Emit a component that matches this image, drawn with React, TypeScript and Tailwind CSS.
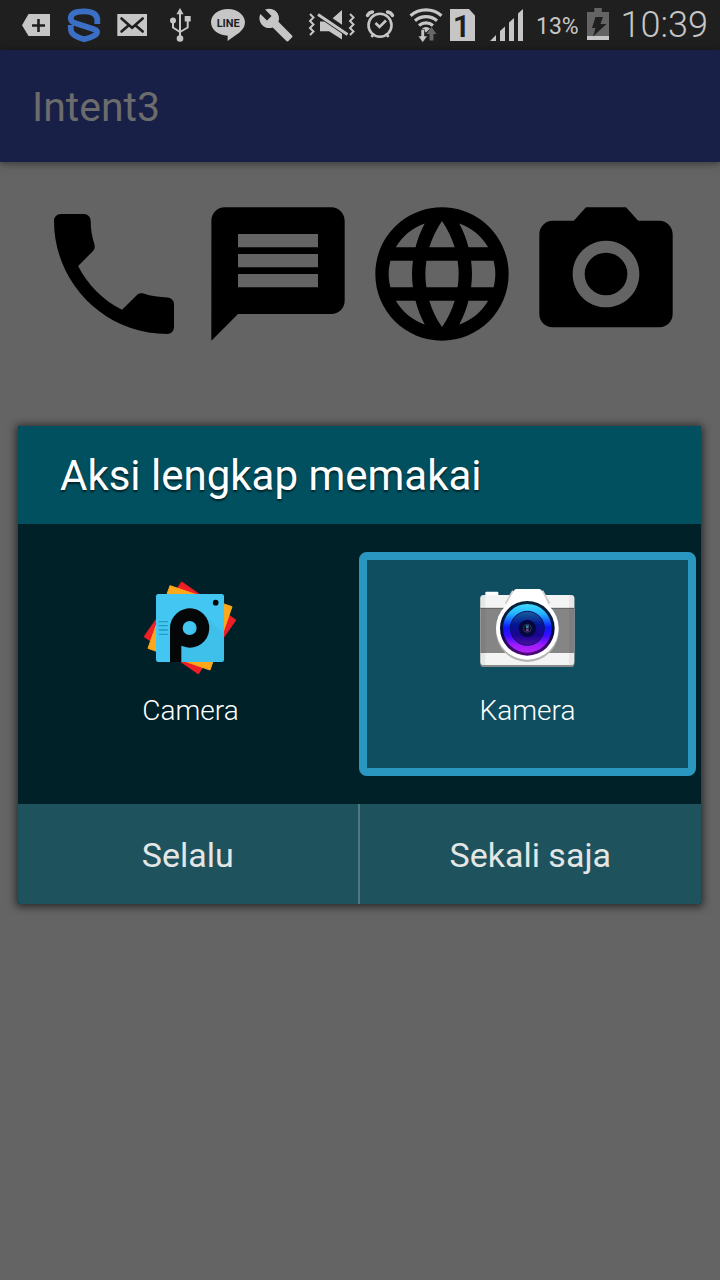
import type { ReactNode } from "react";

const INK = "#c6c6c6";
const DARK = "#1f1f1f";

/* Status bar glyph; `x` is where its slot starts in the bar's drawing space. */
function Glyph({ x, w, className, children }: { x: number; w: number; className: string; children: ReactNode }) {
  return (
    <svg aria-hidden="true" viewBox={`${x} 0 ${w} 50`} className={`h-[50px] shrink-0 ${className}`} fill={INK}>
      {children}
    </svg>
  );
}

function StatusBar() {
  return (
    <header className="flex h-[50px] items-center bg-[#1f1f1f] pl-3 pr-3 text-[#c6c6c6]">
      <Glyph x={12} w={48} className="w-12">
        <path d="M22 25.3 28.5 14H50v22H28.5z" />
        <path d="M38.5 19v13M32 25.5h13" stroke={DARK} strokeWidth="2.6" />
      </Glyph>
      <Glyph x={60} w={48} className="w-12">
        <path
          d="M97.300 24v-5C96.500 13.500 92 11.300 84 11.300S71 13.500 70.700 18c-.2 3 2 4.300 4.800 5.200L94 29.300c3 1 3.700 2.200 2.800 4C95 36.500 89.500 37.800 84 39.300 78.500 37.800 73.500 36 71.500 32c-.7-1.500-.8-4-.8-7"
          fill="none"
          stroke="#3b6fc6"
          strokeWidth="5.800"
          strokeLinejoin="round"
        />
      </Glyph>
      <Glyph x={108} w={48} className="w-12">
        <path d="M117.300 14H147v22h-29.700z" />
        <path d="m121.500 18.500 10.600 9.300 10.600-9.300M121.500 31.500l7-6M142.700 31.500l-7-6" fill="none" stroke={DARK} strokeWidth="2.600" strokeLinecap="round" />
      </Glyph>
      <Glyph x={156} w={48} className="w-12">
        <path d="m180 8 3.600 6.300h-7.200zM184.700 16h6v5.500h-6z" />
        <circle cx="173" cy="20.500" r="3" />
        <circle cx="180" cy="38.500" r="3.300" />
        <path d="M180 13v26M173 21v6.500l7 4.500M187.700 20v7.500l-7.700 4.500" fill="none" stroke={INK} strokeWidth="2" />
      </Glyph>
      <Glyph x={204} w={48} className="w-12">
        <path d="M228 9c9.500 0 17 6 17 13.300 0 4-2 7-5.500 10.200L227.500 41l.3-5.300C218.500 35.500 211 29.700 211 22.300S218.500 9 228 9z" />
        <text x="228.200" y="27" textAnchor="middle" fontSize="11" fontWeight="700" fontFamily="Roboto, sans-serif" fill={DARK}>LINE</text>
      </Glyph>
      <Glyph x={252} w={48} className="w-12">
        <path
          transform="translate(258 7) scale(1.5)"
          d="M22.700 19l-9.100-9.100c.9-2.300.4-5-1.500-6.900-2-2-5-2.400-7.400-1.300L9 6 6 9 1.600 4.700C.4 7.100.9 10.100 2.900 12.100c1.900 1.900 4.600 2.400 6.900 1.500l9.100 9.100c.4.4 1 .4 1.400 0l2.300-2.300c.5-.4.5-1.100.1-1.400z"
        />
      </Glyph>
      <Glyph x={300} w={56} className="w-14">
        <path d="M320 21.500h9L342 10v29.500l-13-8.300h-9z" />
        <path d="m317 12 32 22" stroke={DARK} strokeWidth="7.500" />
        <path d="m318 14.500 29.500 20" stroke={INK} strokeWidth="2.800" />
        <path d="m310 14 3.500 3.500-3.500 3.500 3.500 3.500-3.500 3.500 3.500 3.500-3.500 3.500M350 14l3.500 3.500L350 21l3.500 3.500L350 28l3.500 3.500L350 35" fill="none" stroke={INK} strokeWidth="2" />
      </Glyph>
      <Glyph x={356} w={48} className="w-12">
        <circle cx="380" cy="25.300" r="11.500" fill="none" stroke={INK} strokeWidth="2.600" />
        <path d="m375.500 23 4 4 6.500-6.500M371.500 37l2.500-3.500M388.500 37l-2.500-3.500" fill="none" stroke={INK} strokeWidth="2.600" />
        <path d="M367.500 15.500c1-2 2.500-3.200 5-3.500M392.500 15.500c-1-2-2.500-3.200-5-3.500" fill="none" stroke={INK} strokeWidth="3.400" strokeLinecap="round" />
      </Glyph>
      <Glyph x={404} w={40} className="w-10">
        <path d="M410.500 15.800a23.500 23.500 0 0 1 31 0M415 20.700a17 17 0 0 1 22 0M419 25.400a11 11 0 0 1 14 0" fill="none" stroke={INK} strokeWidth="3.200" />
        <path d="M422 28.600a6 6 0 0 1 8 0l-4 4z" />
        <path d="M421 29.500h3.500V36h3l-4.800 6.500L418 36h3z" stroke={DARK} strokeWidth=".6" />
        <path d="m431.500 27 5 7h-3v6.500h-4V34h-3z" fill="#686868" />
      </Glyph>
      <Glyph x={444} w={36} className="w-9">
        <path d="M450 9h19l6 6.500V41h-25z" />
        <text x="461.500" y="36.500" textAnchor="middle" fontSize="31" fontWeight="600" fontFamily="Roboto, sans-serif" fill={DARK}>1</text>
      </Glyph>
      <Glyph x={480} w={48} className="w-12">
        <path d="m490 41 6-6v6zM500 41V31l5-4.500V41zM509 41V22.500l5-4.500v23zM518 41V13.500l5-4.500v32z" />
      </Glyph>
      <span className="ml-2 pt-1 font-[Roboto,sans-serif] text-[23px] leading-[46px]">13%</span>
      <div className="ml-auto flex items-center gap-1">
        <Glyph x={580} w={36} className="w-9">
          <path d="M593.300 8h7.500v4h7.200v28h-22V12h7.300z" fill="#646464" />
          <path d="M586 36h22v4h-22z" />
          <path d="M594.500 17h7.500l-2.500 7h6L592 36.500l2.500-8.500H591z" fill={DARK} />
        </Glyph>
        <span className="font-[Roboto,sans-serif] text-[36px] font-light leading-[50px]">10:39</span>
      </div>
    </header>
  );
}

const actions = [
  {
    label: "Telepon",
    d: "M6.620 10.790c1.440 2.830 3.760 5.140 6.590 6.590l2.200-2.200c.27-.27.67-.36 1.020-.24 1.120.37 2.330.57 3.570.57.55 0 1 .45 1 1V20c0 .55-.45 1-1 1-9.390 0-17-7.610-17-17 0-.55.45-1 1-1h3.500c.55 0 1 .45 1 1 0 1.250.2 2.450.57 3.570.11.35.03.74-.25 1.020l-2.200 2.200z",
  },
  {
    label: "Pesan",
    d: "M20 2H4c-1.100 0-1.990.9-1.990 2L2 22l4-4h14c1.100 0 2-.9 2-2V4c0-1.100-.9-2-2-2zm-2 12H6v-2h12v2zm0-3H6V9h12v2zm0-3H6V6h12v2z",
  },
  {
    label: "Web",
    d: "M11.990 2C6.470 2 2 6.480 2 12s4.470 10 9.990 10C17.520 22 22 17.520 22 12S17.520 2 11.990 2zm6.930 6h-2.950c-.32-1.250-.78-2.450-1.380-3.560 1.840.63 3.370 1.910 4.330 3.560zM12 4.040c.83 1.200 1.480 2.530 1.910 3.960h-3.820c.43-1.430 1.080-2.760 1.910-3.960zM4.260 14C4.100 13.360 4 12.690 4 12s.1-1.360.26-2h3.380c-.08.66-.14 1.320-.14 2 0 .68.06 1.340.14 2H4.260zm.82 2h2.950c.32 1.250.78 2.450 1.380 3.560-1.840-.63-3.370-1.900-4.330-3.560zm2.950-8H5.080c.96-1.660 2.490-2.930 4.330-3.560C8.810 5.550 8.350 6.750 8.030 8zM12 19.960c-.83-1.200-1.480-2.530-1.910-3.960h3.820c-.43 1.430-1.080 2.760-1.910 3.960zM14.340 14H9.660c-.09-.66-.16-1.320-.16-2 0-.68.07-1.350.16-2h4.680c.09.65.16 1.320.16 2 0 .68-.07 1.340-.16 2zm.25 5.560c.6-1.110 1.060-2.310 1.380-3.560h2.950c-.96 1.650-2.490 2.930-4.330 3.560zM16.360 14c.08-.66.14-1.320.14-2 0-.68-.06-1.340-.14-2h3.380c.16.64.26 1.310.26 2s-.1 1.360-.26 2h-3.380z",
  },
  {
    label: "Kamera",
    d: "M12 8.800a3.200 3.200 0 1 0 0 6.400a3.200 3.200 0 1 0 0-6.400zM9 2L7.170 4H4c-1.100 0-2 .9-2 2v12c0 1.100.9 2 2 2h16c1.100 0 2-.9 2-2V6c0-1.100-.9-2-2-2h-3.170L15 2H9zm3 15c-2.760 0-5-2.240-5-5s2.240-5 5-5 5 2.240 5 5-2.240 5-5 5z",
  },
];

function PhotoAppIcon() {
  return (
    <svg aria-hidden="true" viewBox="39 30 288 288" className="size-24">
      <path d="M155 35 318 150 205 312 42 200z" fill="#ee1f25" stroke="#ee1f25" strokeWidth="2" strokeLinejoin="round" />
      <path d="M120 47 306 110 240 300 54 235z" fill="#fba81c" stroke="#fba81c" strokeWidth="3" strokeLinejoin="round" />
      <rect x="78" y="72" width="204" height="204" rx="7" fill="#43c6f1" />
      <path d="m221 132 61 61v76q0 7-7 7H154v-45z" fill="#35b4df" opacity=".3" />
      <path d="M88 155h24M88 167h24M88 180h24M88 193h24" stroke="#1f9bc4" strokeWidth="4" strokeLinecap="round" />
      <path fillRule="evenodd" d="M120 276V174a59 59 0 1 1 34 53.500V276zM179 153a21 21 0 1 0 0 42 21 21 0 1 0 0-42z" fill="#050608" />
      <circle cx="257" cy="98" r="8.500" fill="#050608" />
    </svg>
  );
}

function CameraAppIcon() {
  return (
    <svg aria-hidden="true" viewBox="44 15 288 288" className="size-24">
      <defs>
        <linearGradient id="lens" x1="0" y1="0" x2="0" y2="1">
          <stop offset="0" stopColor="#3fdcff" />
          <stop offset=".2" stopColor="#22b4ff" />
          <stop offset=".48" stopColor="#0a18ff" />
          <stop offset=".65" stopColor="#3a0cff" />
          <stop offset=".85" stopColor="#a01cff" />
          <stop offset="1" stopColor="#b424f4" />
        </linearGradient>
        <linearGradient id="rim" x1="0" y1="0" x2="0" y2="1">
          <stop offset="0" stopColor="#022838" />
          <stop offset=".6" stopColor="#080840" />
          <stop offset="1" stopColor="#520a80" />
        </linearGradient>
        <linearGradient id="glass" x1="0" y1="0" x2="0" y2="1">
          <stop offset="0" stopColor="#155f9c" />
          <stop offset=".4" stopColor="#061490" />
          <stop offset=".7" stopColor="#1a0590" />
          <stop offset="1" stopColor="#4b10a4" />
        </linearGradient>
      </defs>
      <rect x="60" y="50" width="39" height="20" rx="3" fill="#fff" />
      <rect x="45" y="62" width="282" height="214" rx="10" fill="#8b8b8b" />
      <rect x="45" y="60" width="282" height="210" rx="10" fill="#f4f4f4" />
      <path d="M45 100h282v134H45z" fill="#858585" />
      <path d="M45 100h282" stroke="#5c5c5c" strokeWidth="3" />
      <path d="M311 60h6q10 0 10 10v190q0 10-10 10h-6zM45 70q0-10 10-10h5v210h-5q-10 0-10-10z" fill="#000" opacity=".05" />
      <path d="m122 86 22-38M252 86l-22-38" stroke="#cfcfcf" strokeWidth="8" />
      <circle cx="186" cy="167" r="94" fill="#b5b5b5" />
      <path d="M145 48q3-6 8-6h68q6 0 9 6l18 38-62 30-62-30z" fill="#fff" />
      <circle cx="186" cy="160" r="94" fill="#fff" />
      <circle cx="186" cy="160" r="82" fill="url(#rim)" />
      <circle cx="186" cy="160" r="73" fill="url(#lens)" />
      <circle cx="186" cy="160" r="51" fill="url(#glass)" stroke="#0c1264" strokeWidth="3" />
      <circle cx="186" cy="160" r="26" fill="#04083f" />
      <circle cx="186" cy="160" r="12" fill="#080a20" stroke="#2f3a5c" strokeWidth="3" />
      <path d="M186 151v9" stroke="#3a8ca8" strokeWidth="8" />
      <path d="M186 162v7" stroke="#7a3a98" strokeWidth="8" />
    </svg>
  );
}

function AppChoice({ label, icon, selected = false }: { label: string; icon: ReactNode; selected?: boolean }) {
  return (
    <button
      type="button"
      aria-pressed={selected}
      className={`flex h-56 flex-col items-center gap-4 rounded-lg border-8 pt-5 text-[28px] font-light leading-[38px] text-white ${
        selected ? "border-[#2a97c1]" : "border-transparent"
      }`}
    >
      {icon}
      <span>{label}</span>
    </button>
  );
}

export default function App() {
  return (
    <div className="flex min-h-screen flex-col bg-[#646464] font-[Roboto,sans-serif]">
      <StatusBar />
      <div className="relative flex grow flex-col">
        <div className="flex h-28 items-center bg-[#192048] px-8 pt-0.5 shadow-[0_1px_8px_rgba(0,0,0,0.5)]">
          <h1 className="text-[41px] leading-[48px] text-[#6c6c6c]">Intent3</h1>
        </div>
        <main className="flex justify-center gap-1 p-8">
          {actions.map((a) => (
            <button key={a.label} type="button" aria-label={a.label} className="size-40">
              <svg aria-hidden="true" viewBox="0 0 24 24" className="size-full" fill="#000">
                <path d={a.d} />
              </svg>
            </button>
          ))}
        </main>

        <div className="absolute inset-0 flex items-center pl-[18px] pr-[19px]">
          <div role="dialog" aria-labelledby="chooser-title" className="w-full overflow-hidden rounded-xs bg-[#002128] shadow-[0_1px_9px_2px_rgba(0,0,0,0.6)]">
            <h2 id="chooser-title" className="bg-[#00505f] px-[42px] pb-[23px] pt-[25px] text-[42px] leading-[50px] text-white [text-shadow:0_2px_2px_rgba(0,0,0,0.6)]">
              Aksi lengkap memakai
            </h2>
            <div className="grid grid-cols-2 py-7 pl-1 pr-[5px]">
              <AppChoice label="Camera" icon={<PhotoAppIcon />} />
              <div className="grid rounded-lg bg-[#0f4e60]">
                <AppChoice label="Kamera" icon={<CameraAppIcon />} selected />
              </div>
            </div>
            <div className="grid h-25 grid-cols-2 bg-[#1e525c] text-[34px] text-[#e4e6e6]">
              <button type="button" className="border-r-2 border-[#51777f] pt-0.5">Selalu</button>
              <button type="button" className="pt-0.5">Sekali saja</button>
            </div>
          </div>
        </div>
      </div>
    </div>
  );
}
